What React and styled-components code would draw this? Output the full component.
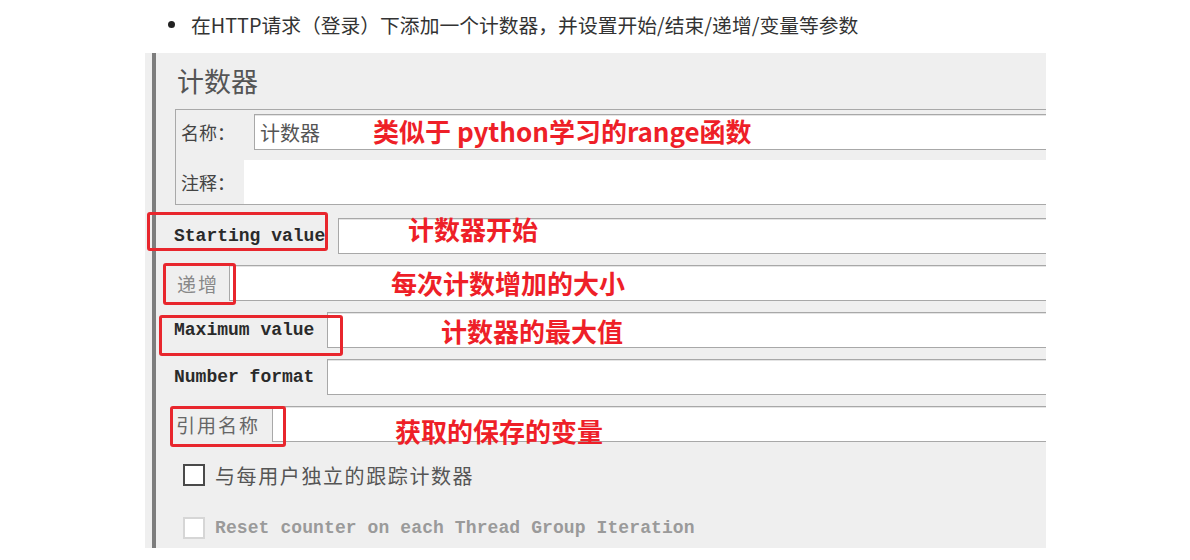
import React from "react";
import styled, { createGlobalStyle } from "styled-components";

const GlobalStyle = createGlobalStyle`
  body {
    margin: 0;
    background: #ffffff;
    font-family: "Noto Sans CJK SC", "Noto Sans", sans-serif;
  }
`;

const Page = styled.div`
  width: 1190px;
  height: 560px;
  overflow: hidden;
`;

const Bullet = styled.div`
  display: flex;
  align-items: center;
  height: 48px;
  padding-left: 168px;
  gap: 16px;
  color: #333;
  font-size: 19.8px;
  font-family: "Noto Sans CJK SC", sans-serif;
`;

const Dot = styled.span`
  width: 7px;
  height: 7px;
  border-radius: 50%;
  background: #222;
`;

const Panel = styled.div`
  margin: 5px 0 0 145px;
  width: 901px;
  height: 495px;
  background: #efefef;
  padding-left: 7px;
  box-sizing: border-box;
  display: flex;
`;

const Inner = styled.div`
  flex: 1;
  border-left: 4px solid #7d7d7d;
  display: flex;
  flex-direction: column;
`;

const Title = styled.div`
  height: 56px;
  line-height: 56px;
  padding-left: 21px;
  font-size: 27px;
  color: #555;
`;

const GroupBox = styled.div`
  margin-left: 19px;
  height: 96px;
  box-sizing: border-box;
  border: 1px solid #a9a9a9;
  border-right: none;
  padding-top: 4px;
  display: flex;
  flex-direction: column;
  gap: 10px;
`;

const GroupRow = styled.div`
  position: relative;
  display: flex;
  height: ${({ h }) => h}px;
`;

const GroupLabel = styled.div`
  width: ${({ w }) => w}px;
  padding-left: 5px;
  box-sizing: border-box;
  font-size: 18px;
  color: #444;
  display: flex;
  align-items: ${({ bottom }) => (bottom ? "flex-end" : "center")};
  padding-bottom: ${({ bottom }) => (bottom ? "9px" : "0")};
`;

const TextBox = styled.div`
  flex: 1;
  background: #fff;
  border: 1px solid #a8a8a8;
  border-right: none;
  box-shadow: inset 0 1px 0 #e4e4e4;
  display: flex;
  align-items: center;
  padding-left: 5px;
  font-size: 20px;
  color: #555;
`;

const Blank = styled.div`
  flex: 1;
  background: #fff;
`;

const Fields = styled.div`
  margin: 13px 0 0 16px;
  display: flex;
  flex-direction: column;
  gap: 11px;
`;

const FieldRow = styled.div`
  position: relative;
  display: flex;
  height: 36px;
`;

const FieldLabel = styled.div`
  width: ${({ w }) => w}px;
  padding-left: ${({ pad }) => pad}px;
  box-sizing: border-box;
  display: flex;
  align-items: center;
  white-space: nowrap;
  color: ${({ tone }) => tone || "#2a2a2a"};
  font-family: ${({ mono }) =>
    mono ? `"Liberation Mono", monospace` : `"Noto Sans CJK SC", sans-serif`};
  font-size: ${({ mono }) => (mono ? "18px" : "19px")};
  font-weight: ${({ mono }) => (mono ? 700 : 400)};
  letter-spacing: ${({ mono }) => (mono ? "0" : "2px")};
`;

const Input = styled.div`
  flex: 1;
  background: #fff;
  border: 1px solid #a8a8a8;
  border-right: none;
  box-shadow: inset 0 1px 0 #e4e4e4;
`;

const RedBox = styled.div`
  position: absolute;
  left: ${({ x }) => x}px;
  top: ${({ y }) => y}px;
  width: ${({ w }) => w}px;
  height: ${({ h }) => h}px;
  box-sizing: border-box;
  border: 3px solid #e8262d;
  border-radius: 3px;
`;

const Note = styled.div`
  position: absolute;
  left: ${({ x }) => x}px;
  top: ${({ y }) => y}px;
  line-height: 36px;
  white-space: nowrap;
  color: #ee1f28;
  font-family: "Noto Sans CJK SC", sans-serif;
  font-weight: 700;
  font-size: 26px;
`;

const Checks = styled.div`
  margin: 22px 0 0 27px;
  display: flex;
  flex-direction: column;
  gap: 31px;
`;

const CheckRow = styled.div`
  display: flex;
  align-items: center;
  height: 22px;
  gap: 10px;
`;

const Box = styled.span`
  width: 22px;
  height: 22px;
  box-sizing: border-box;
  background: #fff;
  border: 2px solid ${({ disabled }) => (disabled ? "#d6d6d6" : "#4a4a4a")};
`;

const CheckText = styled.span`
  white-space: nowrap;
  color: ${({ disabled }) => (disabled ? "#9a9a9a" : "#555")};
  font-family: ${({ mono }) =>
    mono ? `"Liberation Mono", monospace` : `"Noto Sans CJK SC", sans-serif`};
  font-size: ${({ mono }) => (mono ? "18px" : "20px")};
  font-weight: ${({ mono }) => (mono ? 700 : 400)};
  letter-spacing: ${({ mono }) => (mono ? "0.1px" : "1.6px")};
`;

const fields = [
  {
    label: "Starting value", mono: true, w: 166, pad: 2,
    box: { x: -25, y: -6, w: 181, h: 39 },
    note: { text: "计数器开始", x: 236, y: -7 },
  },
  {
    label: "递增", w: 57, pad: 5, tone: "#888",
    box: { x: -9, y: -2, w: 73, h: 42 },
    note: { text: "每次计数增加的大小", x: 219, y: 0 },
  },
  {
    label: "Maximum value", mono: true, w: 155, pad: 2,
    box: { x: -13, y: 3, w: 184, h: 41 },
    note: { text: "计数器的最大值", x: 269, y: 1 },
  },
  { label: "Number format", mono: true, w: 155, pad: 2 },
  {
    label: "引用名称", w: 100, pad: 4, tone: "#666",
    box: { x: -2, y: 0, w: 116, h: 41 },
    note: { text: "获取的保存的变量", x: 223, y: 7 },
  },
];

const App = () => {
  return (
    <Page>
      <GlobalStyle />
      <Bullet>
        <Dot />
        <span>在HTTP请求（登录）下添加一个计数器，并设置开始/结束/递增/变量等参数</span>
      </Bullet>
      <Panel>
        <Inner>
          <Title>计数器</Title>
          <GroupBox>
            <GroupRow h={36}>
              <GroupLabel w={78}>名称：</GroupLabel>
              <TextBox>计数器</TextBox>
              <Note x={197} y={-1}>类似于 python学习的range函数</Note>
            </GroupRow>
            <GroupRow h={44}>
              <GroupLabel w={68} bottom>注释：</GroupLabel>
              <Blank />
            </GroupRow>
          </GroupBox>
          <Fields>
            {fields.map((f) => (
              <FieldRow key={f.label}>
                <FieldLabel w={f.w} pad={f.pad} mono={f.mono} tone={f.tone}>
                  {f.label}
                </FieldLabel>
                <Input />
                {f.box && <RedBox {...f.box} />}
                {f.note && (
                  <Note x={f.note.x} y={f.note.y}>
                    {f.note.text}
                  </Note>
                )}
              </FieldRow>
            ))}
          </Fields>
          <Checks>
            <CheckRow>
              <Box />
              <CheckText>与每用户独立的跟踪计数器</CheckText>
            </CheckRow>
            <CheckRow>
              <Box disabled />
              <CheckText mono disabled>
                Reset counter on each Thread Group Iteration
              </CheckText>
            </CheckRow>
          </Checks>
        </Inner>
      </Panel>
    </Page>
  );
};

export default App;
